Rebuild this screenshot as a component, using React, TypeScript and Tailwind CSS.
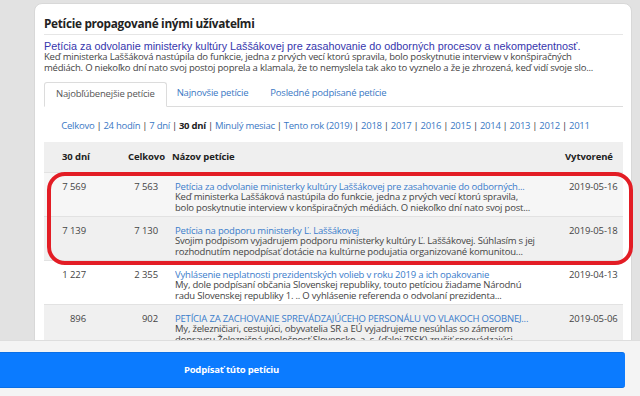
import React from "react";

const segoe = { fontFamily: '"Open Sans", "Noto Sans", sans-serif' };

type Row = {
  d30: string;
  total: string;
  title: string;
  desc1: string;
  desc2: string;
  date: string;
  bg: string;
};

const rows: Row[] = [
  {
    d30: "7 569",
    total: "7 563",
    title: "Petícia za odvolanie ministerky kultúry Laššákovej pre zasahovanie do odborných...",
    desc1: "Keď ministerka Laššáková nastúpila do funkcie, jedna z prvých vecí ktorú spravila,",
    desc2: "bolo poskytnutie interview v konšpiračných médiách. O niekoľko dní nato svoj post...",
    date: "2019-05-16",
    bg: "bg-[#f6f6f6]",
  },
  {
    d30: "7 139",
    total: "7 130",
    title: "Petícia na podporu ministerky Ľ. Laššákovej",
    desc1: "Svojim podpisom vyjadrujem podporu ministerky kultúry Ľ. Laššákovej. Súhlasím s jej",
    desc2: "rozhodnutím nepodpísať dotácie na kultúrne podujatia organizované komunitou...",
    date: "2019-05-18",
    bg: "bg-[#f0f0f0]",
  },
  {
    d30: "1 227",
    total: "2 355",
    title: "Vyhlásenie neplatnosti prezidentských volieb v roku 2019 a ich opakovanie",
    desc1: "My, dole podpísaní občania Slovenskej republiky, touto petíciou žiadame Národnú",
    desc2: "radu Slovenskej republiky 1.   ..  O vyhlásenie referenda o odvolaní prezidenta...",
    date: "2019-04-13",
    bg: "bg-white",
  },
  {
    d30: "896",
    total: "902",
    title: "PETÍCIA ZA ZACHOVANIE SPREVÁDZAJÚCEHO PERSONÁLU VO VLAKOCH OSOBNEJ...",
    desc1: "My, železničiari, cestujúci, obyvatelia SR a EÚ vyjadrujeme nesúhlas so zámerom",
    desc2: "dopravcu Železničná spoločnosť Slovensko, a. s. (ďalej ZSSK) zrušiť sprevádzajúci...",
    date: "2019-05-06",
    bg: "bg-[#f0f0f0]",
  },
];

const filters = [
  "Celkovo",
  "24 hodín",
  "7 dní",
  "30 dní",
  "Minulý mesiac",
  "Tento rok (2019)",
  "2018",
  "2017",
  "2016",
  "2015",
  "2014",
  "2013",
  "2012",
  "2011",
];

export default function App() {
  return (
    <div
      className="relative w-[640px] h-[396px] overflow-hidden bg-[#e2e2e2] text-[#333] text-[9.5px] tracking-[-0.2px]"
      style={segoe}
    >
      <div className="pt-[3px] pl-[34px]">
        <div className="w-[598px] rounded-t-[8px] bg-white border border-[#d8d8d8] pl-[9px] pr-[8px] pt-[11px] pb-[40px]">
          {/* Title */}
          <div className="text-[11.8px] tracking-[-0.3px] font-bold leading-[16px] text-[#222] pb-[3px] border-b border-[#e6e6e6]">
            Petície propagované inými užívateľmi
          </div>
          <div className="pt-[5px]">
            <div
              className="text-[10.8px] tracking-normal leading-[12px] text-[#3636ad] whitespace-nowrap"
              style={{ fontFamily: '"Liberation Sans", Arial, sans-serif' }}
            >
              Petícia za odvolanie ministerky kultúry Laššákovej pre zasahovanie do odborných procesov a nekompetentnosť.
            </div>
            <div className="leading-[10.5px] text-[#444] whitespace-nowrap">
              <div>
                Keď ministerka Laššáková nastúpila do funkcie, jedna z prvých vecí ktorú spravila, bolo poskytnutie interview v konšpiračných
              </div>
              <div>
                médiách. O niekoľko dní nato svoj postoj poprela a klamala, že to nemyslela tak ako to vyznelo a že je zhrozená, keď vidí svoje slo...
              </div>
            </div>
          </div>

          {/* Tabs */}
          <div className="mt-[9px] flex items-end border-b border-[#dcdcdc] h-[25px] whitespace-nowrap">
            <div className="h-[25px] -mb-px px-[11px] flex items-center border border-[#dcdcdc] border-b-white bg-white rounded-t-[3px] text-[#555]">
              Najobľúbenejšie petície
            </div>
            <div className="h-[25px] pl-[10px] pr-[10px] flex items-center text-[#3a78c4]">
              Najnovšie petície
            </div>
            <div className="h-[25px] pl-[12px] flex items-center text-[#3a78c4]">
              Posledné podpísané petície
            </div>
          </div>

          {/* Filters */}
          <div className="mt-[12px] flex justify-center leading-[14px] pr-[16px] whitespace-nowrap tracking-[-0.25px]">
            {filters.map((f, i) => (
              <React.Fragment key={f}>
                {i > 0 && <span className="text-[#333] px-[2px]">|</span>}
                {f === "30 dní" ? (
                  <span className="font-bold text-[#222]">{f}</span>
                ) : (
                  <span className="text-[#3a78c4]">{f}</span>
                )}
              </React.Fragment>
            ))}
          </div>

          {/* Table */}
          <div className="mt-[9px]">
            <div className="flex items-center h-[30px] bg-[#efefef] pl-[18px] font-bold text-[#222] tracking-[-0.1px] whitespace-nowrap">
              <div className="w-[66px]">30 dní</div>
              <div className="w-[44px]">Celkovo</div>
              <div className="flex-1">Názov petície</div>
              <div className="w-[58px]">Vytvorené</div>
            </div>
            {rows.map((r) => (
              <div
                key={r.date}
                className={`flex h-[44px] pt-[8px] border-t border-[#e2e2e2] leading-[10.5px] whitespace-nowrap ${r.bg}`}
              >
                <div className="w-[42px] text-right leading-[11px] tracking-[-0.1px] text-[#444]">{r.d30}</div>
                <div className="w-[72px] text-right leading-[11px] tracking-[-0.1px] text-[#444]">{r.total}</div>
                <div className="w-[388px] ml-[17px] overflow-hidden">
                  <div className="text-[#3a7ccb] leading-[11px]">{r.title}</div>
                  <div className="text-[#444]">{r.desc1}</div>
                  <div className="text-[#444]">{r.desc2}</div>
                </div>
                <div className="pl-[6px] leading-[11px] tracking-[-0.1px] text-[#444]">{r.date}</div>
              </div>
            ))}
          </div>
        </div>
      </div>

      {/* Red annotation */}
      <div className="absolute left-[47px] top-[172px] w-[586px] h-[93px] rounded-[18px] border-[4.5px] border-[#e31d25] pointer-events-none" />

      {/* Bottom bar */}
      <div className="absolute left-0 right-0 bottom-0 h-[56px] bg-[#f4f4f4] border-t border-[#dedede]">
        <div className="mt-[11px] w-[625px] h-[36px] bg-[#0b7bff] border-y border-[#0a6fe6] rounded-r-[3px] flex items-center justify-center pr-[162px] text-white text-[9.5px] font-bold">
          Podpísať túto petíciu
        </div>
      </div>
    </div>
  );
}
